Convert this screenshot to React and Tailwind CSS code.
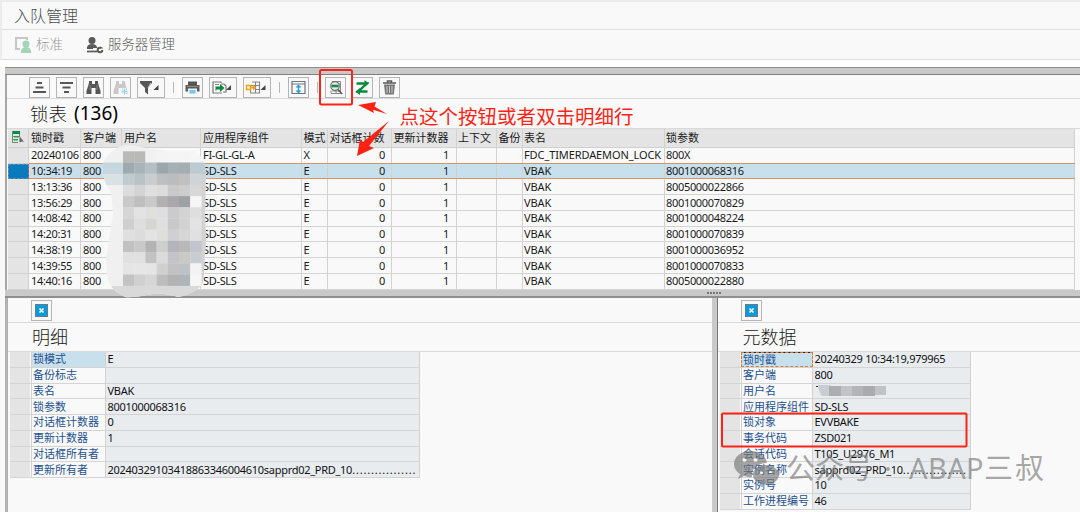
import React from "react";

const locks = [
  { time: "20240106", client: "800", component: "FI-GL-GL-A", mode: "X", table: "FDC_TIMERDAEMON_LOCK", param: "800X" },
  { time: "10:34:19", client: "800", component: "SD-SLS", mode: "E", table: "VBAK", param: "8001000068316" },
  { time: "13:13:36", client: "800", component: "SD-SLS", mode: "E", table: "VBAK", param: "8005000022866" },
  { time: "13:56:29", client: "800", component: "SD-SLS", mode: "E", table: "VBAK", param: "8001000070829" },
  { time: "14:08:42", client: "800", component: "SD-SLS", mode: "E", table: "VBAK", param: "8001000048224" },
  { time: "14:20:31", client: "800", component: "SD-SLS", mode: "E", table: "VBAK", param: "8001000070839" },
  { time: "14:38:19", client: "800", component: "SD-SLS", mode: "E", table: "VBAK", param: "8001000036952" },
  { time: "14:39:55", client: "800", component: "SD-SLS", mode: "E", table: "VBAK", param: "8001000070833" },
  { time: "14:40:16", client: "800", component: "SD-SLS", mode: "E", table: "VBAK", param: "8005000022880" },
];

const details = [
  ["锁模式", "E"],
  ["备份标志", ""],
  ["表名", "VBAK"],
  ["锁参数", "8001000068316"],
  ["对话框计数器", "0"],
  ["更新计数器", "1"],
  ["对话框所有者", ""],
  ["更新所有者", "20240329103418863346004610sapprd02_PRD_10", "................."],
];

const metadata = [
  ["锁时戳", "20240329 10:34:19,979965"],
  ["客户端", "800"],
  ["用户名", ""],
  ["应用程序组件", "SD-SLS"],
  ["锁对象", "EVVBAKE"],
  ["事务代码", "ZSD021"],
  ["会话代码", "T105_U2976_M1"],
  ["实例名称", "sapprd02_PRD_10", "................."],
  ["实例号", "10"],
  ["工作进程编号", "46"],
];

// pixelated user names, one row of greys per line
const mosaic = [
  ["#b9b9b7", "#b9b9b7", "#f1f1f1", "#f4f4f4", "#f5f5f5", "#f5f5f5", "#f6f6f6"],
  ["#9eaab0", "#a9b4b9", "#b3bfc5", "#9ba7ad", "#a4b0b6", "#a3adb2", "#bccad2"],
  ["#c0cbcf", "#b9c3c7", "#c9cdcf", "#bdbfc0", "#bcbcbc", "#c0c0c0", "#ced4d8"],
  ["#dcdcdc", "#d3d3d3", "#dfdfdf", "#dcdcdc", "#c9c9ca", "#cdcdcd", "#d7d7d7"],
  ["#c9c9c9", "#bebebe", "#cacaca", "#b2b2b2", "#a9a7ac", "#9fa2a4", "#f6f6f6"],
  ["#d6d6d6", "#e3e3e3", "#dfdfdc", "#dedede", "#cbcbce", "#d3d3d3", "#dedede"],
  ["#cfcfcf", "#dedede", "#d5d5d3", "#dfdfdf", "#c9c9cc", "#d2d2d2", "#e3e3e3"],
  ["#e0e0e0", "#dcdcdc", "#e3e3e3", "#dedfda", "#d0d0d4", "#d6d6d6", "#e0e0e2"],
  ["#c1c1c1", "#c9c9c9", "#b4b4b4", "#ced0cb", "#b4b4ba", "#b9b9b9", "#c0c4cc"],
  ["#e0e0e0", "#e0e0e0", "#c2c2c2", "#dbdbdb", "#c4c4c8", "#cbc9c4", "#c9ccd3"],
  ["#e5e5e5", "#e6e6e6", "#e5e5e5", "#d0d0d0", "#c2c2c2", "#bcc2c5", "#f3f3f3"],
  ["#c3c3c3", "#d0d0d0", "#d6d6d6", "#bdbdbb", "#b2b2b2", "#aeb4b7", "#f6f6f6"],
];

const cell = "border-r border-[#d2d2d2] pl-[2px] whitespace-nowrap overflow-hidden shrink-0 h-full flex items-center";

function LockRow({ row, selected, last }) {
  const line = selected
    ? "bg-[#c8e0ec] border-[#dd9263]"
    : last
      ? "border-[#d9935f]"
      : "border-[#d4d4d4]";
  return (
    <div className="flex h-[15.74px]">
      <div
        className={
          selected
            ? "w-[21px] shrink-0 bg-[#0a7abf] border border-dashed border-[#5f8fb5] border-r-[#d65a5a]"
            : "w-[21px] shrink-0 bg-[#e4e4e4] border-b border-r border-[#d0d0d0]"
        }
      />
      <div className={`flex w-[1046px] border-b tracking-[-0.32px] ${line}`}>
        <div className={`${cell} w-[52px]`}>{row.time}</div>
        <div className={`${cell} w-[41px]`}>{row.client}</div>
        <div className={`${cell} w-[79px]`} />
        <div className={`${cell} w-[101px]`}>{row.component}</div>
        <div className={`${cell} w-[26px] indent-[-0.500px]`}>{row.mode}</div>
        <div className={`${cell} w-[64px] justify-end pr-[6px]`}>0</div>
        <div className={`${cell} w-[65px] justify-end pr-[7px]`}>1</div>
        <div className={`${cell} w-[40px]`} />
        <div className={`${cell} w-[26px]`} />
        <div className={`${cell} w-[142px] indent-[-1px] tracking-[-0.1px]`}>{row.table}</div>
        <div className={`${cell} w-[410px] indent-[-1px]`}>{row.param}</div>
      </div>
    </div>
  );
}

function PropertyGrid({ rows, labelWidth, valueWidth, focused }) {
  return (
    <div className="w-fit text-[11px] leading-[14px]">
      {rows.map(([label, value, dots], i) => (
        <div key={label} className="flex h-[15.76px] border-b border-[#d4d4d4]">
          <div className="w-[20px] shrink-0 bg-[#e4e4e4] mr-px" />
          <div
            className={`${labelWidth} shrink-0 flex items-center pl-px whitespace-nowrap text-[#245190] border-x border-[#d2d2d2] ${
              i === 0 ? "bg-[#c8e0ec]" : ""
            } ${i === 0 && focused ? "outline-1 -outline-offset-1 outline-dashed outline-[#d97b3c] border-t border-t-[#222]" : ""}`}
          >
            {label}
          </div>
          <div className={`${valueWidth} shrink-0 flex items-center pl-[1.500px] whitespace-nowrap bg-[#e8ecef] border-r border-[#d2d2d2] text-[#111] tracking-[-0.28px]`}>
            {label === "用户名" ? <NameMask /> : value}
            {dots && <span className="tracking-[0.82px]">{dots}</span>}
          </div>
        </div>
      ))}
    </div>
  );
}

function NameMask() {
  return (
    <svg width="76" height="12" viewBox="0 0 76 12" className="mt-px">
      <path d="M1 1h2v1h-2z" fill="#333" />
      <path d="M3 0h13v11H7q-3-3-4-11z" fill="#c9cdd3" />
      <path d="M14 1h12v10H14z" fill="#acaeb1" />
      <path d="M26 1h11v10H26z" fill="#c2c4c7" />
      <path d="M37 1h11v10H37z" fill="#b3b5b8" />
      <path d="M48 1h12v10H48z" fill="#a9abae" />
      <path d="M60 1h11v9H60z" fill="#c0c2c5" />
    </svg>
  );
}

function ToolButton({ wide, children }) {
  return (
    <div
      className={`${wide ? "w-[28px]" : "w-[21px]"} h-[21px] shrink-0 border border-[#b5b5b5] bg-[#f8f8f8] flex items-center justify-center`}
    >
      {children}
    </div>
  );
}

function Icon({ w = 17, children }) {
  return (
    <svg width={w} height="17" viewBox={`0 0 ${w} 17`} fill="none" className="shrink-0">
      {children}
    </svg>
  );
}

function Separator() {
  return (
    <div className="w-[5px] flex justify-center">
      <div className="w-px h-[11px] bg-[#b8b8b8] shrink-0" />
    </div>
  );
}

function Binoculars({ color }) {
  return (
    <path
      d="M4 2h3v3h3V2h3v2l2.5 8v3h-5V9h-4v6h-5v-3L4 4z"
      fill={color}
    />
  );
}

function Toolbar() {
  return (
    <div className="flex items-center h-[23px] pl-[22px] gap-[6px] border-b border-[#d9d9d9]">
      <ToolButton>
        <Icon>
          <path d="M6 4h5M4.500 8.500h8M2 13h13" stroke="#565656" strokeWidth="2.200" />
        </Icon>
      </ToolButton>
      <ToolButton>
        <Icon>
          <path d="M2 4h13M4.500 8.500h8M6 13h5" stroke="#565656" strokeWidth="2.200" />
        </Icon>
      </ToolButton>
      <ToolButton>
        <Icon>
          <Binoculars color="#555555" />
          <path d="M5 6v5M12 6v5" stroke="#858585" />
        </Icon>
      </ToolButton>
      <ToolButton>
        <Icon>
          <Binoculars color="#c9c9c9" />
          <path d="M12.500 9v7M9 12.500h7" stroke="#f8f8f8" strokeWidth="3" />
          <path d="M12.500 9.500v6M9.500 12.500h6" stroke="#9bd1ec" strokeWidth="1.500" />
        </Icon>
      </ToolButton>
      <ToolButton wide>
        <Icon w={24}>
          <path d="M1 2h12v2L9 8.500v7L6 13V9L1 4z" fill="#575757" />
          <path d="M9 9l3-5" stroke="#b9c7d0" strokeWidth="1.200" />
          <path d="M19.500 6v5h-5z" fill="#444" />
        </Icon>
      </ToolButton>
      <Separator />
      <ToolButton>
        <Icon>
          <path d="M4 2.500h9V6H4z" fill="#555" />
          <path d="M1.500 6h14v6.500h-14z" fill="#5b5b5b" />
          <path d="M4 9.500h9V15H4z" fill="#e9f4fa" />
          <path d="M5.500 11h6v3.500h-6z" fill="#7cc4e8" />
          <path d="M3 7.500h11" stroke="#8c8c8c" />
        </Icon>
      </ToolButton>
      <ToolButton wide>
        <Icon w={24}>
          <path d="M10 4V3H2v11h9M10 5h3l2 2v6h-3" stroke="#777" strokeWidth="1.200" />
          <path d="M4 5.500h4M4 11h2" stroke="#8a8a8a" />
          <path d="M4.500 7.500H9V5l4.500 4L9 13v-2.500H4.500z" fill="#078a3e" />
          <path d="M20 6v5h-5z" fill="#444" />
        </Icon>
      </ToolButton>
      <ToolButton wide>
        <Icon w={24}>
          <path d="M7 3h7.500v11H5.500v-3M10.500 3v11M6 6.500h8.500M10 10.500h4.500" stroke="#858585" strokeWidth="1.100" />
          <path d="M1.500 6.500h4v4h-4z" stroke="#f0a21a" strokeWidth="1.500" />
          <path d="M5.500 7.500H8V5.500l3 3-3 3V9.500H5.500z" fill="#f0a21a" />
          <path d="M20.500 6v5h-5z" fill="#444" />
        </Icon>
      </ToolButton>
      <Separator />
      <ToolButton>
        <Icon>
          <path d="M2 2.500h13v12H2zM2 5h13" stroke="#6b7780" strokeWidth="1.200" />
          <path d="M8.500 6.500v7M6.500 8.500l2-2 2 2M6.500 11.500l2 2 2-2" stroke="#1f9fd8" strokeWidth="1.400" />
        </Icon>
      </ToolButton>
      <div className="-ml-[0.5px] -mr-[0.5px]">
        <Separator />
      </div>
      <ToolButton>
        <Icon>
          <path d="M5 2.500h8.500v12H4v-3M9 2.500v12M5 12h8.500M11 5h2.500" stroke="#8b8b8b" />
          <circle cx="8" cy="7" r="4.300" fill="#e6eee9" stroke="#707070" strokeWidth="1.200" />
          <path d="M4.500 7h7" stroke="#128c48" strokeWidth="2.600" />
          <path d="M11 10.500l4 4.500" stroke="#5f5f5f" strokeWidth="1.800" />
        </Icon>
      </ToolButton>
      <ToolButton>
        <Icon>
          <path d="M2.500 4.500h10L4.500 12.500h9" stroke="#078a3e" strokeWidth="2.400" />
          <path d="M10.500 1L15 4.500 10.500 8zM6 9l-4.500 3.500L6 16z" fill="#078a3e" />
        </Icon>
      </ToolButton>
      <ToolButton>
        <Icon>
          <path d="M2 4h13M6.500 3.500V2h4v1.500" stroke="#5a5a5a" strokeWidth="1.500" />
          <path d="M3 5.500h11l-1.200 10H4.200z" fill="#777" />
          <path d="M6 7v7M8.500 7v7M11 7v7" stroke="#dedede" strokeWidth=".8" />
        </Icon>
      </ToolButton>
    </div>
  );
}

function CloseButton() {
  return (
    <ToolButton>
      <svg width="13" height="13" viewBox="0 0 13 13">
        <path d="M0 0h13v13H0z" fill="#647d8a" />
        <path d="M1 1h11v11H1z" fill="#0a9ada" />
        <path d="M4.500 4.500l4 4M8.500 4.500l-4 4" stroke="#fff" strokeWidth="1.700" />
      </svg>
    </ToolButton>
  );
}

function Annotations() {
  return (
    <>
      <svg className="absolute inset-0 pointer-events-none" width="1080" height="512" viewBox="0 0 1080 512">
        <clipPath id="smudge">
          <path d="M121 146Q130 144 140 147L165 151 195 151Q205 158 206 172L205 215 206 240 204 270Q204 284 200 287Q190 295 178 297Q160 291 147 295Q132 298 125 297Q110 290 107 277L106 258 113 214 111 191Q103 184 102 165Q108 151 121 146z" />
        </clipPath>
        <g clipPath="url(#smudge)">
          <path d="M100 140h110v160H100z" fill="#f0f0f0" />
          <path d="M100 162.500h24v11.500h-24z" fill="#c6d7e0" />
          <path d="M100 174h24v11h-24z" fill="#d9e1e5" />
          <path d="M200 162.500h10v12h-10z" fill="#bfcbd1" />
          <path d="M200 174h10v124h-10z" fill="#d3d3d3" />
          <path d="M100 286h105v12h-105z" fill="#d9d9d9" />
          {mosaic.map((line, y) =>
            line.map((color, x) => (
              <rect
                key={`${y}-${x}`}
                x={123 + x * 11.2}
                y={151.3 + y * 11.2}
                width="11.4"
                height="11.4"
                fill={color}
              />
            ))
          )}
        </g>

        <g fill="#fc2213">
          <path d="M358 105L376 102 374.500 106.500 387 114 373 109.800 374 113z" />
          <path d="M357 156L360 139 363 142 389 121 369 146 374 148z" />
        </g>
        <g fill="none" stroke="#fb2416" strokeWidth="2">
          <rect x="320" y="70" width="32" height="34.500" rx="1.500" />
          <rect x="722" y="413.500" width="244.500" height="33" rx="1" />
        </g>

        {/* WeChat bubbles */}
        <g fill="#777777" opacity=".65">
          <path
            fillRule="evenodd"
            d="M750 451c-9 0-16 6-16 13 0 4 2 7.500 6 10l-2 5 6-3q4 1.500 8 1c-1-8 6-14 15-14-1-7-8-12-17-12zM744.500 458a2 2 0 1 1 0 4 2 2 0 0 1 0-4zM755.500 458a2 2 0 1 1 0 4 2 2 0 0 1 0-4z"
          />
          <path
            fillRule="evenodd"
            d="M766 465c-7 0-13 4.500-13 10s6 9.500 13 9.500l4-.5 5 2.500-1-4c3-2 5-4.500 5-7.500 0-5.500-6-10-13-10zM761.500 471a1.500 1.500 0 1 1 0 3 1.500 1.500 0 0 1 0-3zM770.500 471a1.500 1.500 0 1 1 0 3 1.500 1.500 0 0 1 0-3z"
          />
        </g>
      </svg>
      <div className="absolute left-[399.5px] top-[103.5px] text-[19.5px] leading-[26px] text-[#fb2416] whitespace-nowrap">
        点这个按钮或者双击明细行
      </div>
      <div className="absolute left-[786px] top-[449px] h-[38px] flex items-center text-[29px] text-[#777777]/65 whitespace-nowrap">
        <span className="w-[98px]">公众号</span>
        <span className="w-[25px]">·</span>
        <span className="w-[75px] tracking-[0.4px]">ABAP</span>
        <span className="tracking-[2px]">三叔</span>
      </div>
    </>
  );
}

export default function App() {
  return (
    <div className="relative w-[1080px] h-[512px] overflow-hidden bg-[#fbf9f8] text-[#1a1a1a] font-['Noto_Sans','Noto_Sans_CJK_SC',sans-serif]">
      {/* Title and application toolbar */}
      <div className="h-[60px] border-t-2 border-l-2 border-[#ececec] bg-[#f9f9f9]">
        <div className="h-[28px] pl-[12px] flex items-center border-b border-[#dedede] text-[16px] font-light text-[#4d4d4d]">
          入队管理
        </div>
        <div className="h-[30px] pl-[12px] flex items-center border-b border-[#dedede] text-[13.4px] font-light">
          <svg width="18" height="18" viewBox="0 0 18 18">
            <path d="M6 13H2V2h11v2" fill="none" stroke="#c6c6c6" strokeWidth="2" />
            <circle cx="12" cy="8" r="3.500" fill="#a5d4b7" />
            <path d="M7 17v-2q1-4 5-4t5 4v2z" fill="#a5d4b7" />
          </svg>
          <span className="ml-[4px] w-[50px] text-[#9a9a9a]">标准</span>
          <svg width="18" height="18" viewBox="0 0 18 18">
            <circle cx="6" cy="4.500" r="3.500" fill="#5a5a5a" />
            <path d="M1 13v-2q1-3 5-3t5 3v1H7v1z" fill="#5a5a5a" />
            <path d="M1 15.500h10" stroke="#5a5a5a" strokeWidth="1.700" />
            <circle cx="14" cy="14" r="2.300" fill="none" stroke="#5a5a5a" strokeWidth="2" />
            <path d="M15 12.500h3v1.500h-3z" fill="#f9f9f9" />
          </svg>
          <span className="ml-[4px] text-[#5c5c5c]">服务器管理</span>
        </div>
      </div>
      <div className="h-[7px] bg-white" />

      <div className="ml-[5px]">
        {/* Lock table */}
        <div className="h-[8px] border-t border-b border-t-[#8e8e8e] border-b-[#808080] bg-[#c9c9c9]" />
        <div className="h-[215px] border-l-2 border-[#a6a6a6] bg-[#f9f9f9] pt-[1px]">
          <Toolbar />
          <div className="h-[30px] pl-[23px] flex items-center gap-[7px] border-b border-[#d9d9d9] text-[18.5px]">
            <span className="font-light">锁表</span>
            <span className="text-black text-[19px]">(136)</span>
          </div>
          <div className="pl-px text-[11px] leading-[14px]">
            <div className="flex h-[19px] w-[1067px] bg-[#e4e4e4] border-b border-[#d0d0d0]">
              <div className="w-[21px] shrink-0 border-r border-[#d0d0d0] flex justify-center pt-[1px]">
                <svg width="14" height="14" viewBox="0 0 14 14">
                  <path d="M1 1h8v3H1z" fill="#0b8a43" />
                  <path d="M1.500 1v11.500H7M1 6.500h7M1 9.500h5M8.500 4v3" fill="none" stroke="#63906f" />
                  <path d="M3 6h5v1.500H3zM3 9h4v1.500H3z" fill="#2f9a5b" />
                  <path d="M8.500 12.500V6l4.500 6-2-.5z" fill="#666" />
                </svg>
              </div>
              <div className={`${cell} w-[52px]`}>锁时戳</div>
              <div className={`${cell} w-[41px]`}>客户端</div>
              <div className={`${cell} w-[79px]`}>用户名</div>
              <div className={`${cell} w-[101px]`}>应用程序组件</div>
              <div className={`${cell} w-[26px] indent-[-0.500px]`}>模式</div>
              <div className={`${cell} w-[64px] indent-[-0.500px]`}>对话框计数</div>
              <div className={`${cell} w-[65px] indent-[-0.500px]`}>更新计数器</div>
              <div className={`${cell} w-[40px] indent-[-1px]`}>上下文</div>
              <div className={`${cell} w-[26px] indent-[-0.500px]`}>备份</div>
              <div className={`${cell} w-[142px] indent-[-1px]`}>表名</div>
              <div className={`${cell} w-[410px] indent-[-1px]`}>锁参数</div>
            </div>
            {locks.map((row, i) => (
              <LockRow key={row.time} row={row} selected={i === 1} last={i === 0} />
            ))}
          </div>
        </div>

        {/* Splitter */}
        <div className="h-[8px] bg-[#c9c9c9] border-b-2 border-[#909090] flex justify-center items-center gap-px pl-[343px]">
          <i className="size-[2px] bg-[#777]" />
          <i className="size-[2px] bg-[#777]" />
          <i className="size-[2px] bg-[#777]" />
          <i className="size-[2px] bg-[#777]" />
          <i className="size-[2px] bg-[#777]" />
        </div>

        <div className="flex h-[214px] bg-[#f9f9f9]">
          <div className="w-[707px] shrink-0 border-l-3 border-[#b2b2b2]">
            <div className="h-[25px] pl-[23px] pt-[2px] border-b border-[#d9d9d9]">
              <CloseButton />
            </div>
            <div className="h-[29px] pt-px pl-[24px] flex items-center border-b border-[#d9d9d9] text-[18px] font-light">明细</div>
            <div className="pl-[2px]">
              <PropertyGrid rows={details} labelWidth="w-[75px]" valueWidth="w-[314px]" />
            </div>
          </div>
          <div className="w-[6px] shrink-0 bg-[#c9c9c9] border-r border-[#777]" />
          <div className="grow">
            <div className="h-[25px] pl-[23px] pt-[2px] border-b border-[#d9d9d9]">
              <CloseButton />
            </div>
            <div className="h-[29px] pt-px pl-[24.500px] flex items-center border-b border-[#d9d9d9] text-[18px] font-light">元数据</div>
            <div className="pl-[2px]">
              <PropertyGrid rows={metadata} labelWidth="w-[72px]" valueWidth="w-[158px]" focused />
            </div>
          </div>
        </div>
      </div>

      <Annotations />
    </div>
  );
}
